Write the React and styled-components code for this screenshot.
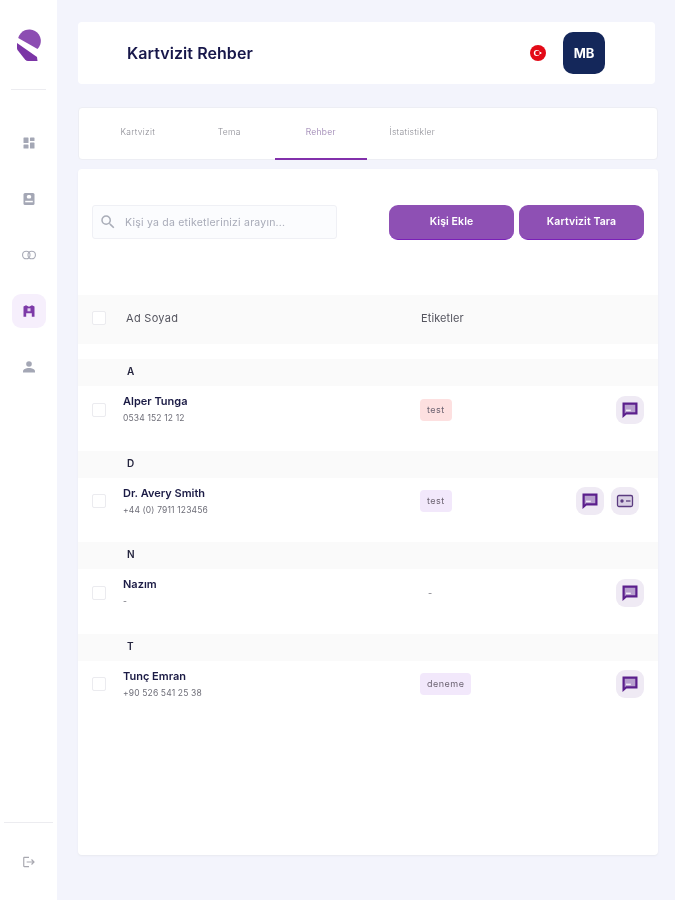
import React from "react";
import styled, { createGlobalStyle } from "styled-components";
import { MdOutlineSearch, MdLogout } from "react-icons/md";

const GlobalStyle = createGlobalStyle`
   html, body {
      margin: 0;
      padding: 0;
      background: #f3f4fc;
      font-family: "Inter", "Noto Sans", sans-serif;
   }
   * {
      box-sizing: border-box;
   }
`

const DashIcon = () => (
   <svg width="12" height="12" viewBox="0 0 12 12" fill="#a4a7b5">
      <rect x="0.500" y="0.500" width="5" height="5.500" rx="0.600" />
      <rect x="7" y="0.500" width="4.500" height="3.500" rx="0.600" />
      <rect x="0.500" y="7.500" width="5" height="4" rx="0.600" />
      <rect x="7" y="5.500" width="4.500" height="6" rx="0.600" />
   </svg>
)

const ContactIcon = () => (
   <svg width="14" height="14" viewBox="0 0 14 14">
      <rect x="1.500" y="1" width="11" height="12" rx="1.500" fill="#a4a7b5" />
      <rect x="4.800" y="3" width="4.400" height="3.500" rx="1.500" fill="#fff" />
      <rect x="3.200" y="8.800" width="7.600" height="1.500" fill="#fff" />
   </svg>
)

const LinkIcon = () => (
   <svg width="14" height="10" viewBox="0 0 14 10" fill="none" stroke="#a8aab6" strokeWidth="1.100">
      <rect x="0.600" y="1.200" width="7.400" height="7.600" rx="3.600" />
      <rect x="6" y="1.200" width="7.400" height="7.600" rx="3.600" />
   </svg>
)

const RehberIcon = () => (
   <svg width="14" height="14" viewBox="0 0 14 14">
      <path d="M1.500 2.400 4 1.200l3 1.500 3-1.500 2.500 1.200v10.400H9.800V9.300H4.200v3.500H1.500z" fill="#7d3aa8" />
      <rect x="5.500" y="4.300" width="3" height="3" fill="#e4d3f0" />
   </svg>
)

const PersonIcon = () => (
   <svg width="14" height="14" viewBox="0 0 14 14" fill="#a4a7b5">
      <circle cx="7" cy="4" r="2.800" />
      <path d="M1 12.500v-1.300C1 9.300 4 8 7 8s6 1.300 6 3.200v1.300z" />
   </svg>
)

const ChatIcon = () => (
   <svg width="18" height="18" viewBox="0 0 18 18">
      <path d="M1.500 1.500h15v12H5.500l-4 3.500z" fill="#5b1f8c" />
      <path d="M3.700 3.700h10.600v7.600H5l-1.300 1.200z" fill="#b7a0ce" />
      <path d="M5 8.600h4.800v1.500H5z" fill="#f2edf7" />
   </svg>
)

const CardIcon = () => (
   <svg width="18" height="18" viewBox="0 0 18 18">
      <rect x="1.500" y="3.500" width="15" height="11" rx="1.500" fill="#d9d0e4" stroke="#5b3b80" strokeWidth="1.300" />
      <circle cx="6" cy="9" r="1.700" fill="#5b3b80" />
      <path d="M10 9h4.500" stroke="#7d6799" strokeWidth="1.800" />
   </svg>
)

const Logo = () => (
   <svg width="24" height="34" viewBox="0 0 24 34">
      <path d="M1.200 10A11.500 11.500 0 1 1 20.500 21Z" fill="#8c4db2" />
      <path d="M0 15 20 29l.5 4H11q-1.500 0-3-1.500L.5 22Q0 21 0 20z" fill="#7b35a6" />
   </svg>
)

const Flag = () => (
   <svg width="16" height="16" viewBox="0 0 16 16">
      <circle cx="8" cy="8" r="8" fill="#e30a17" />
      <circle cx="6.800" cy="8" r="3" fill="#fff" />
      <circle cx="7.500" cy="8" r="2.300" fill="#e30a17" />
      <circle cx="10.500" cy="8" r="1" fill="#fff" />
   </svg>
)

const tabs = ["Kartvizit", "Tema", "Rehber", "İstatistikler"]

const groups = [
   { letter: "A", name: "Alper Tunga", phone: "0534 152 12 12", tag: "test", tone: "red", actions: ["chat"] },
   { letter: "D", name: "Dr. Avery Smith", phone: "+44 (0) 7911 123456", tag: "test", tone: "purple", actions: ["chat", "card"] },
   { letter: "N", name: "Nazım", phone: "-", tag: null, actions: ["chat"] },
   { letter: "T", name: "Tunç Emran", phone: "+90 526 541 25 38", tag: "deneme", tone: "purple", actions: ["chat"] },
]

const App = () => {
   return (
      <Page>
         <GlobalStyle />
         <Sidebar>
            <LogoBox><Logo /></LogoBox>
            <SideDivider />
            <SideMenu>
               <SideItem><DashIcon /></SideItem>
               <SideItem><ContactIcon /></SideItem>
               <SideItem><LinkIcon /></SideItem>
               <SideItem $active><RehberIcon /></SideItem>
               <SideItem><PersonIcon /></SideItem>
            </SideMenu>
            <BottomDivider />
            <Logout><MdLogout size={14} /></Logout>
         </Sidebar>
         <Main>
            <Header>
               <Title>Kartvizit Rehber</Title>
               <HeaderRight>
                  <Flag />
                  <Avatar>MB</Avatar>
               </HeaderRight>
            </Header>
            <TabCard>
               {tabs.map((tab) => (
                  <Tab key={tab} $active={tab === "Rehber"}>{tab}</Tab>
               ))}
            </TabCard>
            <ContentCard>
               <Toolbar>
                  <SearchBox>
                     <MdOutlineSearch size={18} color="#a9adb8" />
                     <SearchInput placeholder="Kişi ya da etiketlerinizi arayın..." readOnly />
                  </SearchBox>
                  <Buttons>
                     <PrimaryButton>Kişi Ekle</PrimaryButton>
                     <PrimaryButton>Kartvizit Tara</PrimaryButton>
                  </Buttons>
               </Toolbar>
               <TableHead>
                  <Checkbox />
                  <HeadName>Ad Soyad</HeadName>
                  <HeadTag>Etiketler</HeadTag>
               </TableHead>
               <GroupList>
                  {groups.map((group) => (
                     <Group key={group.letter}>
                        <Letter>{group.letter}</Letter>
                        <Row>
                           <Checkbox />
                           <div>
                              <Name>{group.name}</Name>
                              <Phone>{group.phone}</Phone>
                           </div>
                           <TagCell>
                              {group.tag ? <Tag $tone={group.tone}>{group.tag}</Tag> : <NoTag>-</NoTag>}
                           </TagCell>
                           <Actions $inset={group.actions.length > 1}>
                              {group.actions.map((action) => (
                                 <ActionButton key={action}>
                                    {action === "chat" ? <ChatIcon /> : <CardIcon />}
                                 </ActionButton>
                              ))}
                           </Actions>
                        </Row>
                     </Group>
                  ))}
               </GroupList>
            </ContentCard>
         </Main>
      </Page>
   )
}
export default App

const Page = styled.div`
   display: flex;
   width: 675px;
   height: 900px;
   overflow: hidden;
   background: #f3f4fc;
   filter: blur(0.4px);
`
const Sidebar = styled.aside`
   width: 57px;
   height: 900px;
   flex-shrink: 0;
   background: #fff;
   display: flex;
   flex-direction: column;
   align-items: center;
   padding-top: 28px;
`
const LogoBox = styled.div`
   height: 34px;
   display: flex;
`
const SideDivider = styled.div`
   width: 35px;
   height: 1px;
   background: #ececf0;
   margin-top: 27px;
`
const SideMenu = styled.nav`
   display: flex;
   flex-direction: column;
   gap: 22px;
   margin-top: 36px;
`
const SideItem = styled.div`
   width: 34px;
   height: 34px;
   border-radius: 9px;
   display: flex;
   align-items: center;
   justify-content: center;
   background: ${(props) => (props.$active ? "#f6effc" : "transparent")};
`
const BottomDivider = styled.div`
   width: 49px;
   height: 1px;
   background: #ececf0;
   margin-top: auto;
`
const Logout = styled.div`
   height: 14px;
   color: #a8a8b0;
   display: flex;
   margin: 32px 0 31px;
`
const Main = styled.main`
   flex: 1;
   padding: 22px 17px 0 21px;
   display: flex;
   flex-direction: column;
`
const Header = styled.header`
   width: 577px;
   height: 62px;
   background: #fff;
   border-radius: 4px;
   display: flex;
   align-items: center;
   justify-content: space-between;
   padding: 0 50px 0 49px;
`
const Title = styled.h1`
   margin: 0;
   font-size: 16px;
   font-weight: 600;
   color: #17174a;
   letter-spacing: 0.06px;
`
const HeaderRight = styled.div`
   display: flex;
   align-items: center;
   gap: 17px;
`
const Avatar = styled.div`
   width: 42px;
   height: 42px;
   border-radius: 10px;
   background: #14275a;
   color: #fff;
   font-size: 13px;
   font-weight: 700;
   display: flex;
   align-items: center;
   justify-content: center;
`
const TabCard = styled.div`
   height: 53px;
   margin-top: 23px;
   background: #fff;
   border: 1px solid #edeef4;
   border-radius: 4px;
   display: flex;
   padding-left: 13px;
`
const Tab = styled.div`
   width: 91.5px;
   height: 52px;
   padding-top: 19px;
   text-align: center;
   font-size: 8.500px;
   font-weight: 300;
   letter-spacing: 0.3px;
   color: ${(props) => (props.$active ? "#8f74a8" : "#8c8c94")};
   border-bottom: 2px solid ${(props) => (props.$active ? "#8230ab" : "transparent")};
`
const ContentCard = styled.section`
   height: 686px;
   margin-top: 9px;
   background: #fff;
   border-radius: 4px;
   box-shadow: 0 1px 2px #e8e9f0;
`
const Toolbar = styled.div`
   display: flex;
   justify-content: space-between;
   padding: 36px 14px 0;
`
const SearchBox = styled.div`
   width: 245px;
   height: 34px;
   background: #fbfcfe;
   border: 1px solid #eff0f5;
   border-radius: 3px;
   display: flex;
   align-items: center;
   gap: 6px;
   padding-left: 6px;
`
const SearchInput = styled.input`
   flex: 1;
   min-width: 0;
   border: none;
   outline: none;
   background: transparent;
   font-family: inherit;
   font-size: 10.500px;
   letter-spacing: 0.22px;
   &::placeholder {
      color: #a8abb8;
      opacity: 1;
   }
`
const Buttons = styled.div`
   display: flex;
   gap: 5px;
`
const PrimaryButton = styled.button`
   width: 125px;
   height: 35px;
   border: none;
   border-bottom: 1.5px solid #7a1fb8;
   border-radius: 9px;
   background: #8e50b4;
   color: #fff;
   font-family: inherit;
   font-size: 10.500px;
   font-weight: 600;
   letter-spacing: 0.1px;
   padding: 0 0 2px;
`
const TableHead = styled.div`
   height: 49px;
   margin-top: 55px;
   padding: 0 0 3px 14px;
   background: #fafafa;
   display: grid;
   grid-template-columns: 31px 298px 1fr;
   align-items: center;
`
const HeadName = styled.div`
   padding-left: 3px;
   font-size: 11px;
   letter-spacing: 0.3px;
   color: #55555f;
`
const HeadTag = styled.div`
   font-size: 11px;
   letter-spacing: 0.1px;
   color: #55555f;
`
const Checkbox = styled.div`
   width: 14px;
   height: 14px;
   background: #fff;
   border: 1px solid #ebebef;
   border-radius: 2px;
`
const GroupList = styled.div`
   margin-top: 15px;
`
const Group = styled.div`
   height: 91.500px;
`
const Letter = styled.div`
   height: 27px;
   background: #fafafa;
   padding: 0 0 3px 49px;
   display: flex;
   align-items: center;
   font-size: 10px;
   font-weight: 600;
   color: #25253f;
`
const Row = styled.div`
   display: grid;
   grid-template-columns: 31px 297px 1fr auto;
   align-items: center;
   height: 47px;
   padding: 0 14px;
`
const Name = styled.div`
   font-size: 11px;
   font-weight: 600;
   color: #1b1b45;
   line-height: 14px;
   margin-top: -1px;
`
const Phone = styled.div`
   font-size: 8.500px;
   letter-spacing: 0.15px;
   color: #6e6e78;
   line-height: 12px;
   margin-top: 4px;
`
const TagCell = styled.div`
   display: flex;
   align-items: center;
`
const Tag = styled.span`
   height: 22px;
   line-height: 22px;
   padding: 0 7px;
   border-radius: 4px;
   font-size: 9px;
   letter-spacing: 0.5px;
   color: #6d6472;
   background: ${(props) => (props.$tone === "red" ? "#fde0e0" : "#f2e8fb")};
`
const NoTag = styled.span`
   font-size: 9px;
   color: #77777f;
   padding-left: 8px;
`
const Actions = styled.div`
   display: flex;
   gap: 7px;
   margin-right: ${(props) => (props.$inset ? "5px" : "0")};
`
const ActionButton = styled.div`
   width: 28px;
   height: 28px;
   border-radius: 9px;
   background: #efeaf4;
   display: flex;
   align-items: center;
   justify-content: center;
`
